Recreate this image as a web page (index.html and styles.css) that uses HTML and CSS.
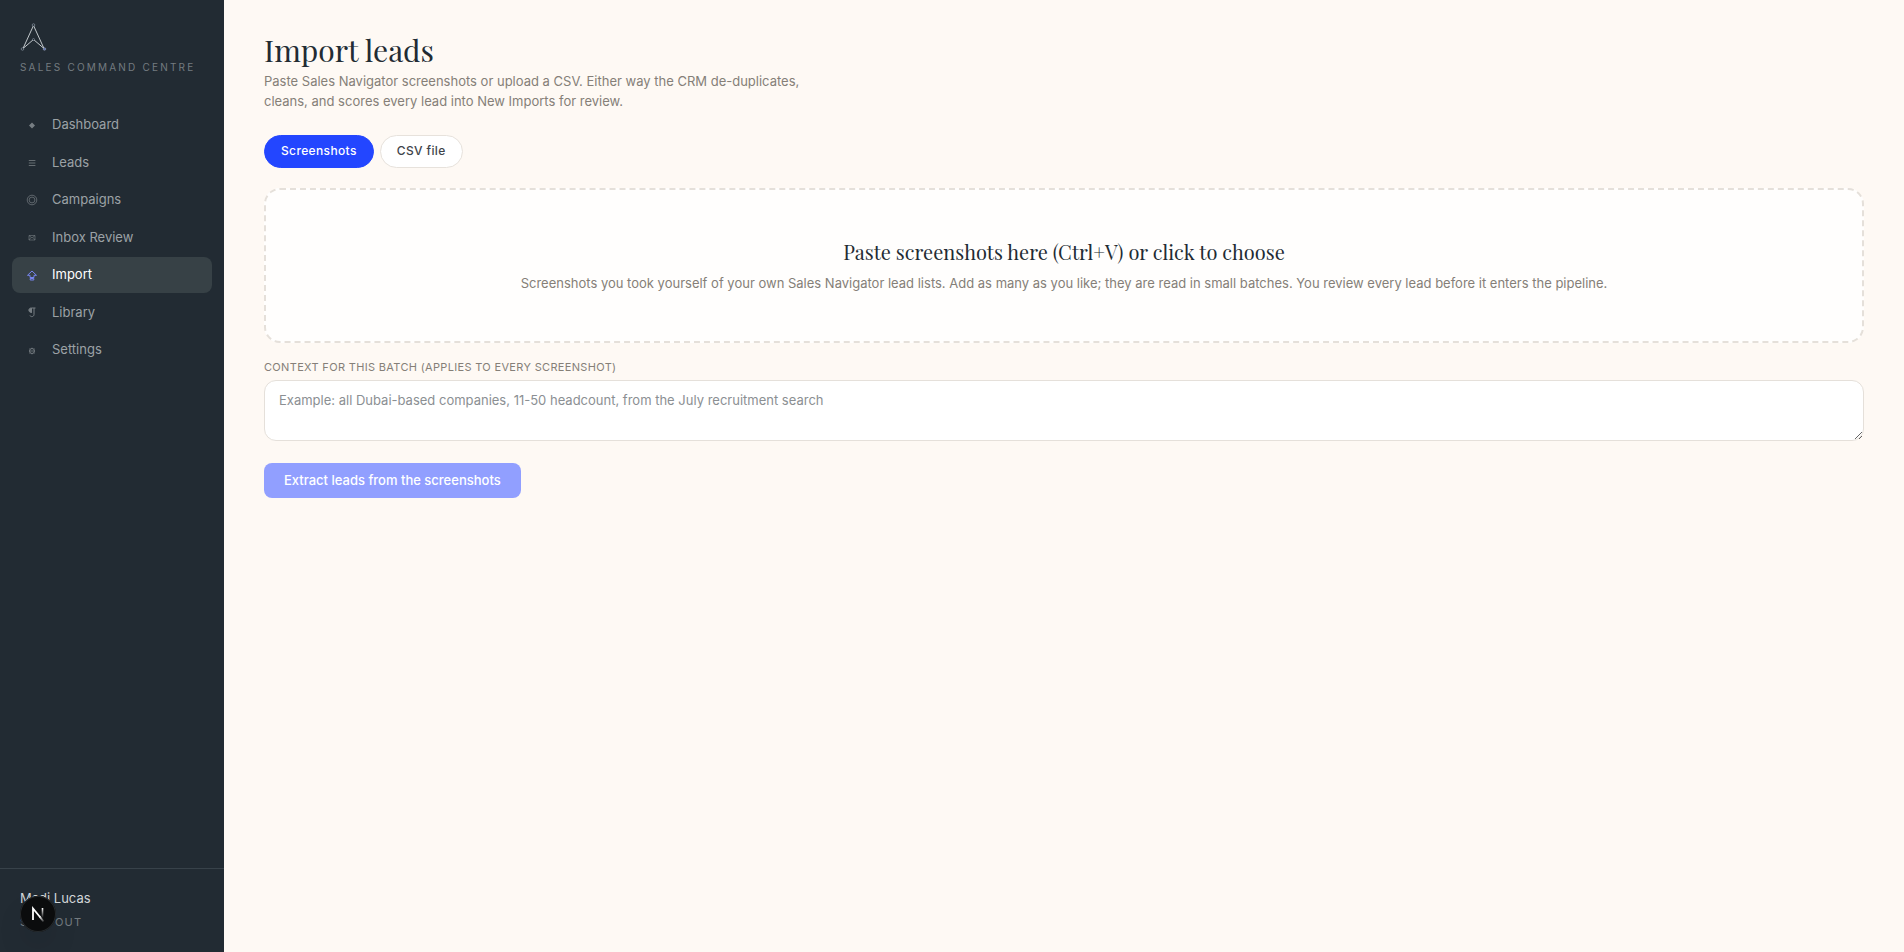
FILE: index.html
```html
<!DOCTYPE html>
<html lang="en">
<head>
    <meta charset="UTF-8">
    <meta name="viewport" content="width=device-width, initial-scale=1.0">
    <title>Import leads</title>
    <link rel="stylesheet" href="styles.css">
</head>
<body>
    <aside class="sidebar">
      <div class="brand">
        <svg class="logo" viewBox="0 0 28 30" fill="none" stroke="#d4d9dc">
          <path d="M13.500 3.500 3 26.500 13.500 17.500 24 26.500Z" stroke-width=".9"/>
          <g stroke="#93a0ad" stroke-width=".6" fill="#222b33">
            <circle cx="13.500" cy="3" r="1.300"/>
            <circle cx="13.500" cy="17.500" r="1"/>
            <circle cx="2.500" cy="27" r="1.300"/>
            <circle cx="24.500" cy="27" r="1.300" fill="#5a6cb0"/>
          </g>
        </svg>
        <div class="brand-name">Sales Command Centre</div>
      </div>

      <nav class="menu">
        <a href="#dashboard">
          <svg viewBox="0 0 12 12"><path d="M6 3.500 9 6.500 6 9.500 3 6.500Z" fill="currentColor" stroke="none"/></svg>
          Dashboard
        </a>
        <a href="#leads">
          <svg viewBox="0 0 12 12"><path d="M2.800 4.500h6.600M2.800 7h6.600M2.800 9.500h6.600" stroke-width=".8"/></svg>
          Leads
        </a>
        <a href="#campaigns">
          <svg viewBox="0 0 12 12"><circle cx="6" cy="6" r="4.800" stroke-width=".7"/><circle cx="6" cy="6" r="2.900" stroke-width=".7"/></svg>
          Campaigns
        </a>
        <a href="#inbox">
          <svg viewBox="0 0 12 12"><path d="M3 4.500h6v4.500H3ZM3 4.500l3 2.500 3-2.500M3 9l2-2.500M9 9 7 6.500" stroke-width=".6"/></svg>
          Inbox Review
        </a>
        <a href="#import" class="active">
          <svg viewBox="0 0 12 12"><path d="M6 2 1.500 6.300H4v2.200h4V6.300h2.500ZM4.200 9.500h3.600V11H4.200Z"/></svg>
          Import
        </a>
        <a href="#library">
          <svg viewBox="0 0 12 12"><path d="M5.500 2C2 1.800 2 6.500 5.500 6.500Z" fill="currentColor"/><path d="M9.500 2h-4v4.500M8 2v6.500C8 11 4.500 11.300 4 9.500"/></svg>
          Library
        </a>
        <a href="#settings">
          <svg viewBox="0 0 12 12"><circle cx="6" cy="7" r="2.500"/><path d="M4 7h4M6 3.700v.8M6 9.500v.8M3.500 4.700l.6.500M8.500 4.700l-.6.500M3.500 9.300l.6-.5M8.500 9.300l-.6-.5" stroke-width=".8"/></svg>
          Settings
        </a>
      </nav>

      <div class="account">
        <div class="user-name">Madi Lucas</div>
        <button type="button" class="sign-out">Sign out</button>
      </div>
    </aside>

    <main class="content">
      <h1>Import leads</h1>
      <p class="intro">Paste Sales Navigator screenshots or upload a CSV. Either way the CRM de-duplicates, cleans, and scores every lead into New Imports for review.</p>

      <div class="tabs">
        <button type="button" class="tab selected">Screenshots</button>
        <button type="button" class="tab">CSV file</button>
      </div>

      <button type="button" class="dropzone">
        <span class="dropzone-title">Paste screenshots here (Ctrl+V) or click to choose</span>
        <span class="dropzone-hint">Screenshots you took yourself of your own Sales Navigator lead lists. Add as many as you like; they are read in small batches. You review every lead before it enters the pipeline.</span>
      </button>

      <label class="field-label" for="context">Context for this batch (applies to every screenshot)</label>
      <textarea id="context" rows="2" placeholder="Example: all Dubai-based companies, 11-50 headcount, from the July recruitment search"></textarea>

      <button type="button" class="extract" disabled>Extract leads from the screenshots</button>
    </main>

    <button type="button" class="dev-badge" aria-label="Open dev tools">
      <svg viewBox="0 0 36 36" fill="none">
        <defs>
          <linearGradient id="fadeDiag" x1="20" y1="20" x2="25" y2="26" gradientUnits="userSpaceOnUse">
            <stop stop-color="#fff"/>
            <stop offset="1" stop-color="#fff" stop-opacity="0"/>
          </linearGradient>
          <linearGradient id="fadeStem" x1="0" y1="12" x2="0" y2="22" gradientUnits="userSpaceOnUse">
            <stop stop-color="#fff"/>
            <stop offset="1" stop-color="#fff" stop-opacity="0"/>
          </linearGradient>
        </defs>
        <path d="M13 24V12.500L20 21" stroke="#fff" stroke-width="1.800"/>
        <path d="M19.500 20.400 23.500 25.500" stroke="url(#fadeDiag)" stroke-width="1.800"/>
        <path d="M22.500 12v10.500" stroke="url(#fadeStem)" stroke-width="1.600"/>
      </svg>
    </button>
</body>
</html>
```
FILE: styles.css
```css
* {
    box-sizing: border-box;
}
body {
    display: flex;
    min-height: 100vh;
    margin: 0;
    background-color: #fef9f4;
    color: #222b33;
    font-family: Inter, "Liberation Sans", sans-serif;
    font-size: 13px;
    line-height: 20px;
}
button, textarea {
    font-family: inherit;
    font-size: inherit;
    line-height: inherit;
}
button {
    cursor: pointer;
}

/* sidebar */
.sidebar {
    display: flex;
    flex-direction: column;
    flex: none;
    width: 224px;
    background-color: #222b33;
    color: #a2a8ac;
}
.brand {
    padding: 22px 20px 0;
}
.logo {
    display: block;
    width: 28px;
    height: 30px;
}
.brand-name {
    margin-top: 7px;
    color: #747b80;
    font-size: 10px;
    line-height: 16px;
    letter-spacing: 0.22em;
    text-transform: uppercase;
    white-space: nowrap;
}
.menu {
    display: flex;
    flex-direction: column;
    gap: 2px;
    padding: 32px 12px;
    line-height: 1.5;
}
.menu a {
    display: flex;
    align-items: center;
    gap: 14px;
    padding: 8px 14px;
    border-radius: 8px;
    color: #9ca2a6;
    text-decoration: none;
}
.menu svg {
    width: 12px;
    height: 12px;
    fill: none;
    stroke: currentColor;
    stroke-width: 1;
    opacity: 0.7;
}
.menu .active {
    background-color: #374146;
    color: #fff;
}
.menu .active svg {
    color: #7f8dff;
    opacity: 0.9;
}
.account {
    margin-top: auto;
    padding: 19px 20px 20px;
    border-top: 1px solid #38424a;
}
.user-name {
    color: #d3d6d8;
}
.sign-out {
    display: block;
    margin-top: 4px;
    padding: 0;
    border: 0;
    background: none;
    color: #747b80;
    font-size: 11px;
    letter-spacing: 0.1em;
    text-transform: uppercase;
}

/* main column */
.content {
    flex: 1;
    min-width: 0;
    padding: 32px 40px;
}
h1 {
    margin: 0 0 3px;
    font-family: "Playfair Display", "Liberation Serif", serif;
    font-size: 30px;
    font-weight: 400;
    line-height: 36px;
}
.intro {
    max-width: 560px;
    margin: 0;
    color: #857f78;
}
.tabs {
    display: flex;
    gap: 6px;
    margin-top: 24px;
}
.tab {
    height: 33px;
    padding: 0 16px 2px;
    border: 1px solid #e7e2dc;
    border-radius: 17px;
    background-color: #fff;
    color: #3f444a;
    font-size: 12px;
    font-weight: 500;
    letter-spacing: 0.03em;
}
.tab.selected {
    border-color: #2346ff;
    background-color: #2346ff;
    color: #fff;
}
.dropzone {
    display: block;
    width: 100%;
    margin-top: 20px;
    padding: 48px 40px;
    border: 2px dashed #e5e0da;
    border-radius: 16px;
    background-color: #fffefd;
    color: #222b33;
    text-align: center;
}
.dropzone-title {
    display: block;
    font-family: "Playfair Display", "Liberation Serif", serif;
    font-size: 20px;
    line-height: 28px;
}
.dropzone-hint {
    display: block;
    margin-top: 7px;
    color: #857f78;
}
.field-label {
    display: block;
    margin-top: 16px;
    color: #857f78;
    font-size: 11px;
    line-height: 16px;
    letter-spacing: 0.03em;
    text-transform: uppercase;
}
textarea {
    display: block;
    width: 100%;
    height: 61px;
    margin-top: 5px;
    padding: 9px 14px;
    border: 1px solid #e5e0da;
    border-radius: 12px;
    background-color: #fff;
    color: #222b33;
    resize: vertical;
}
textarea::placeholder {
    color: #8b8f93;
}
.extract {
    height: 35px;
    margin-top: 22px;
    padding: 0 20px 2px;
    border: 0;
    border-radius: 8px;
    background-color: #919fff;
    color: #fff;
    font-weight: 500;
}

/* floats over the corner of the sidebar */
.dev-badge {
    position: fixed;
    bottom: 20px;
    left: 20px;
    width: 36px;
    height: 36px;
    padding: 0;
    border: 0;
    border-radius: 50%;
    background-color: #0b0c0d;
    box-shadow: inset 0 0 0 1px #262a2d, 0 16px 32px -8px rgba(0, 0, 0, 0.24);
}
.dev-badge svg {
    display: block;
    width: 36px;
    height: 36px;
}
```
